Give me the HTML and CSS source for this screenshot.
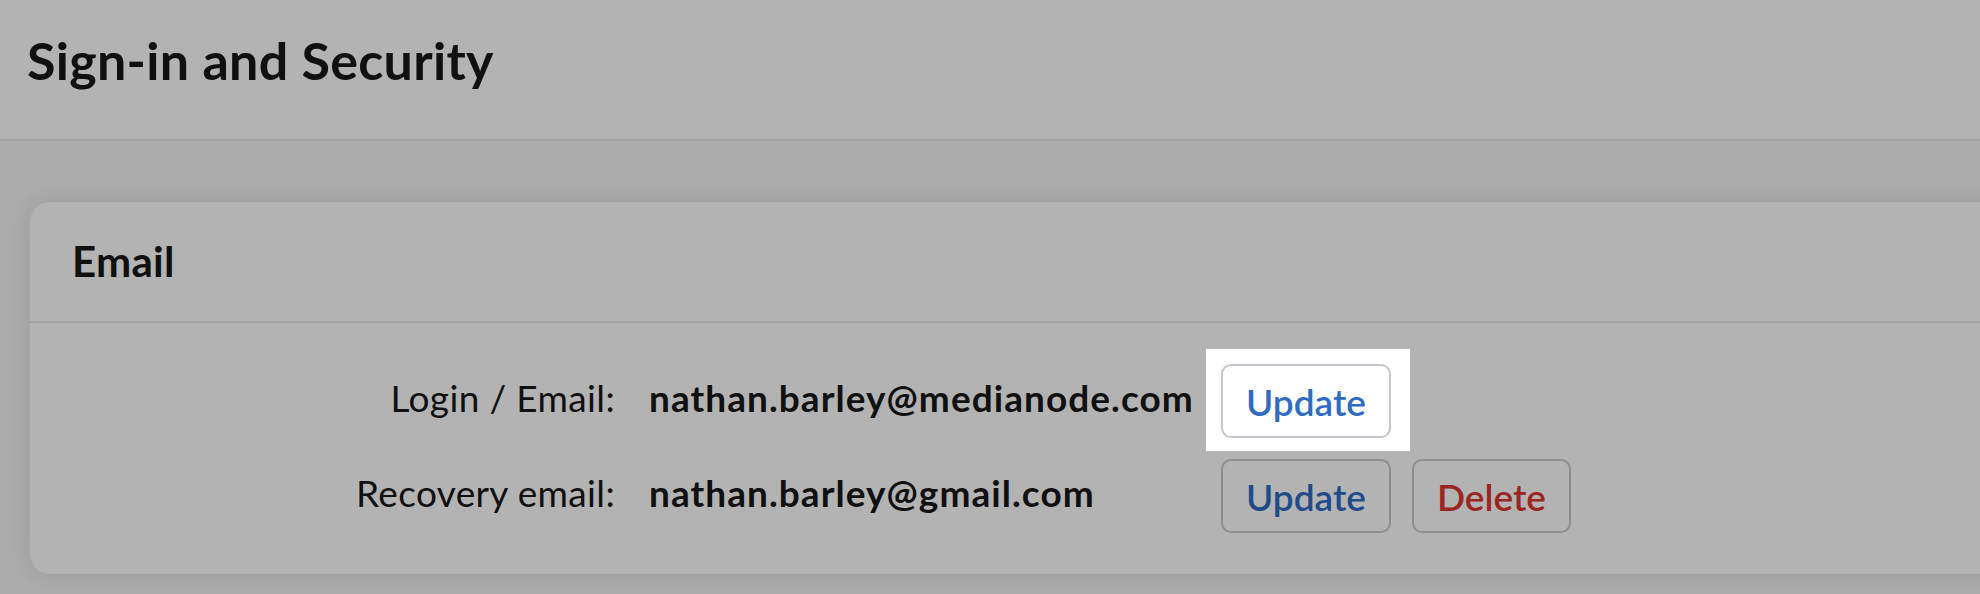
FILE: index.html
```html
<!DOCTYPE html>
<html lang="en">
<head>
<meta charset="utf-8">
<title>Sign-in and Security</title>
<link rel="stylesheet" href="styles.css">
</head>
<body>
  <header class="page-header">
    <h1 class="page-title">Sign-in and Security</h1>
  </header>
  <main class="page-main">
    <section class="card">
      <div class="card-header">
        <h2 class="card-title">Email</h2>
      </div>
      <div class="card-body">
        <div class="field-label">Login / Email:</div>
        <div class="field-value">nathan.barley@medianode.com</div>
        <div class="field-actions">
          <span class="spotlight">
            <button class="btn btn-primary btn-lit" type="button">Update</button>
          </span>
        </div>

        <div class="field-label">Recovery email:</div>
        <div class="field-value">nathan.barley@gmail.com</div>
        <div class="field-actions">
          <button class="btn btn-primary" type="button">Update</button>
          <button class="btn btn-danger" type="button">Delete</button>
        </div>
      </div>
    </section>
  </main>
</body>
</html>
```
FILE: styles.css
```css
html, body {
  margin: 0;
  padding: 0;
  overflow: hidden;
}

body {
  background: #ababab;
  font-family: "Lato", "Inter", "Liberation Sans", sans-serif;
  color: #101010;
  height: 594px;
}

.page-header {
  background: #b3b3b3;
  border-bottom: 2px solid #a4a4a8;
  padding: 29px 0 0 27px;
  box-sizing: content-box;
  height: 110px;
}

.page-title {
  margin: 0;
  font-size: 52px;
  font-weight: 700;
  line-height: normal;
  letter-spacing: 0.3px;
}

.page-main {
  padding: 61px 0 0 30px;
}

.card {
  background: #b3b3b3;
  border-radius: 20px 0 0 20px;
  width: calc(100% + 40px);
  box-shadow: 0 0 22px rgba(0, 0, 0, 0.09);
}

.card-header {
  padding: 34px 40px 35px 42px;
  border-bottom: 2px solid #a4a4a8;
}

.card-title {
  margin: 0;
  font-size: 42px;
  font-weight: 700;
  line-height: normal;
  letter-spacing: 0.3px;
}

.card-body {
  display: grid;
  grid-template-columns: 585px 538px auto;
  column-gap: 34px;
  row-gap: 21px;
  align-items: center;
  padding: 41px 0 41px 0;
}

.field-label {
  text-align: right;
  font-size: 37px;
  font-weight: 400;
  letter-spacing: 0.35px;
  padding-bottom: 8px;
}

.field-value {
  font-size: 37px;
  font-weight: 700;
  letter-spacing: 1.05px;
  padding-bottom: 8px;
  white-space: nowrap;
}

.field-actions {
  display: flex;
  gap: 21px;
  align-items: center;
}

.btn {
  font-family: inherit;
  font-size: 37px;
  font-weight: 600;
  height: 74px;
  padding: 0 23px;
  border-radius: 10px;
  border: 2px solid #8b8d90;
  background: transparent;
  line-height: 1;
  cursor: pointer;
}

.btn-primary {
  color: #1f4b8b;
}

.btn-danger {
  color: #9b2520;
}

.spotlight {
  display: inline-flex;
  background: #ffffff;
  padding: 15px 19px 13px 15px;
  margin: -15px -19px -13px -15px;
}

.btn-lit {
  background: #ffffff;
  border-color: #c2c5ca;
  color: #2f6cc1;
}
```
